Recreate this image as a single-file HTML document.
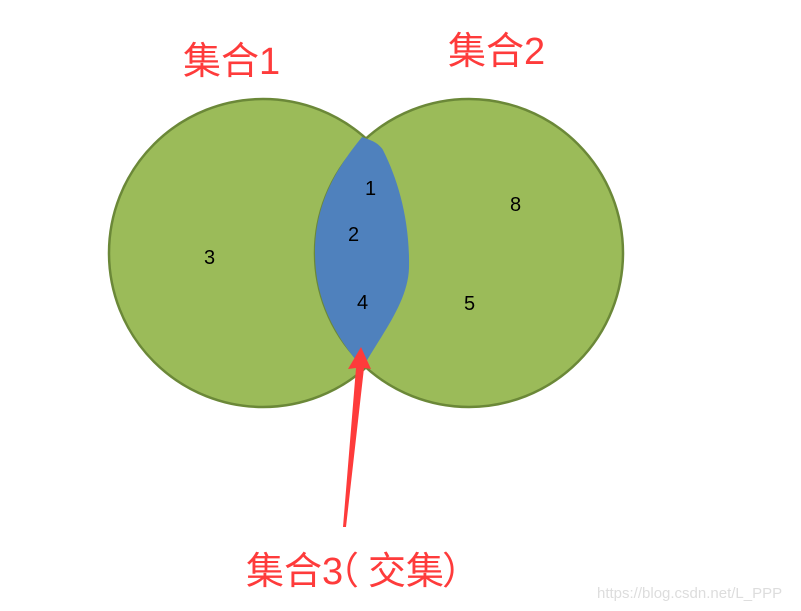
<!DOCTYPE html>
<html><head><meta charset="utf-8"><style>
html,body{margin:0;padding:0;background:#fff;width:801px;height:611px;overflow:hidden}
svg{display:block}
.t{font-family:"Liberation Sans","Noto Sans CJK SC",sans-serif;fill:#fe3b3b}
.n{font-family:"Liberation Sans","DejaVu Sans",sans-serif;font-size:20px;fill:#000}
</style></head><body>
<svg width="801" height="611" viewBox="0 0 801 611">
<circle cx="263" cy="253" r="154" fill="#9bbb59" stroke="#6b8838" stroke-width="2.5"/>
<circle cx="469" cy="253" r="154" fill="#9bbb59" stroke="#6b8838" stroke-width="2.5"/>
<path d="M362,137 C370,140 378,142 383,150 C398,180 410,220 409,268 C408,300 385,330 366,362 L360,365 C335,335 315,300 315,253 C315,205 335,170 362,137 Z" fill="#4f81bd"/>
<text class="n" x="365" y="195">1</text>
<text class="n" x="348" y="241">2</text>
<text class="n" x="357" y="309">4</text>
<text class="n" x="204" y="264">3</text>
<text class="n" x="510" y="211">8</text>
<text class="n" x="464" y="310">5</text>
<polygon points="361,347 371,369 364,368 346,527 343,527 356,368 348,369" fill="#fe3b3b"/>
<text class="t" x="183" y="74" font-size="38">集合1</text>
<text class="t" x="448" y="64" font-size="38">集合2</text>
<text class="t" font-size="38" y="584"><tspan x="246">集合3</tspan><tspan x="321">（</tspan><tspan x="368">交集</tspan><tspan x="442">）</tspan></text>
<text x="597" y="598" font-family="Liberation Sans,sans-serif" font-size="15" fill="#ddd">https://blog.csdn.net/L_PPP</text>
</svg>
</body></html>
